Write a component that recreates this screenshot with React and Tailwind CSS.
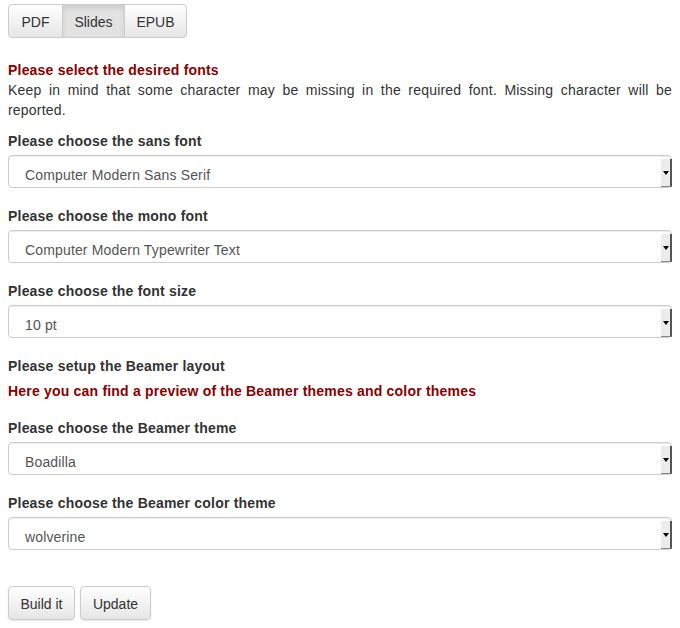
const font = { fontFamily: '"Liberation Sans", Arial, sans-serif' };

function Select({ value }) {
    return (
        <div className="relative flex h-[33px] items-center rounded-[4px] border border-[#cccccc] bg-white pl-[16px] pt-[7px] text-[14px] tracking-[0.15px] text-[#555555] shadow-[inset_0_1px_1px_rgba(0,0,0,0.075)]">
            <span>{value}</span>
            {/* native dropdown arrow */}
            <div className="absolute right-[-1px] top-[3px] flex h-[28px] w-[11px] items-center justify-center border-r-2 border-b border-r-[#555] border-b-[#888] bg-[#ececec]">
                <span className="block h-0 w-0 border-x-[3px] border-t-[4px] border-x-transparent border-t-black"></span>
            </div>
        </div>
    );
}

function Field({ label, value }) {
    return (
        <div className="mb-[18px]">
            <div className="mb-[4px] text-[14px] font-bold leading-[20px] tracking-[0.2px] text-[#333333]">{label}</div>
            <Select value={value} />
        </div>
    );
}

const btn = 'rounded-[4px] border border-[#cccccc] bg-gradient-to-b from-white to-[#e6e6e6] pt-[3px] text-[14px] text-[#333333] shadow-[0_1px_2px_rgba(0,0,0,0.1)]';

export default function App() {
    return (
        <div className="min-h-[628px] bg-white px-[8px] pt-[4px]" style={font}>
            {/* format tabs */}
            <div className="flex">
                <button className="h-[34px] w-[55px] rounded-l-[4px] border border-[#cccccc] bg-gradient-to-b from-white to-[#e6e6e6] pt-[2px] text-[14px] text-[#333333]">PDF</button>
                <button className="-ml-px h-[34px] w-[63px] border border-[#cccccc] bg-[#e2e2e2] pt-[2px] text-[14px] text-[#333333] shadow-[inset_0_3px_5px_rgba(0,0,0,0.1)]">Slides</button>
                <button className="-ml-px h-[34px] w-[63px] rounded-r-[4px] border border-[#cccccc] bg-gradient-to-b from-white to-[#e6e6e6] pt-[2px] text-[14px] text-[#333333]">EPUB</button>
            </div>

            <div className="mt-[22px] text-[14px] font-bold leading-[20px] tracking-[0.2px] text-[#8b0000]">Please select the desired fonts</div>
            <p className="mb-[11px] text-justify text-[14px] leading-[20px] tracking-[0.2px] text-[#333333]">
                Keep in mind that some character may be missing in the required font. Missing character will be reported.
            </p>

            <Field label="Please choose the sans font" value="Computer Modern Sans Serif" />
            <Field label="Please choose the mono font" value="Computer Modern Typewriter Text" />
            <Field label="Please choose the font size" value="10 pt" />

            <div className="text-[14px] font-bold leading-[20px] tracking-[0.2px] text-[#333333]">Please setup the Beamer layout</div>
            <a className="mt-[5px] mb-[17px] block text-[14px] font-bold leading-[20px] tracking-[0.2px] text-[#8b0000]">
                Here you can find a preview of the Beamer themes and color themes
            </a>

            <Field label="Please choose the Beamer theme" value="Boadilla" />
            <Field label="Please choose the Beamer color theme" value="wolverine" />

            <div className="mt-[36px] flex gap-[5px]">
                <button className={`${btn} h-[34px] w-[67px]`}>Build it</button>
                <button className={`${btn} h-[34px] w-[71px]`}>Update</button>
            </div>
        </div>
    );
}
